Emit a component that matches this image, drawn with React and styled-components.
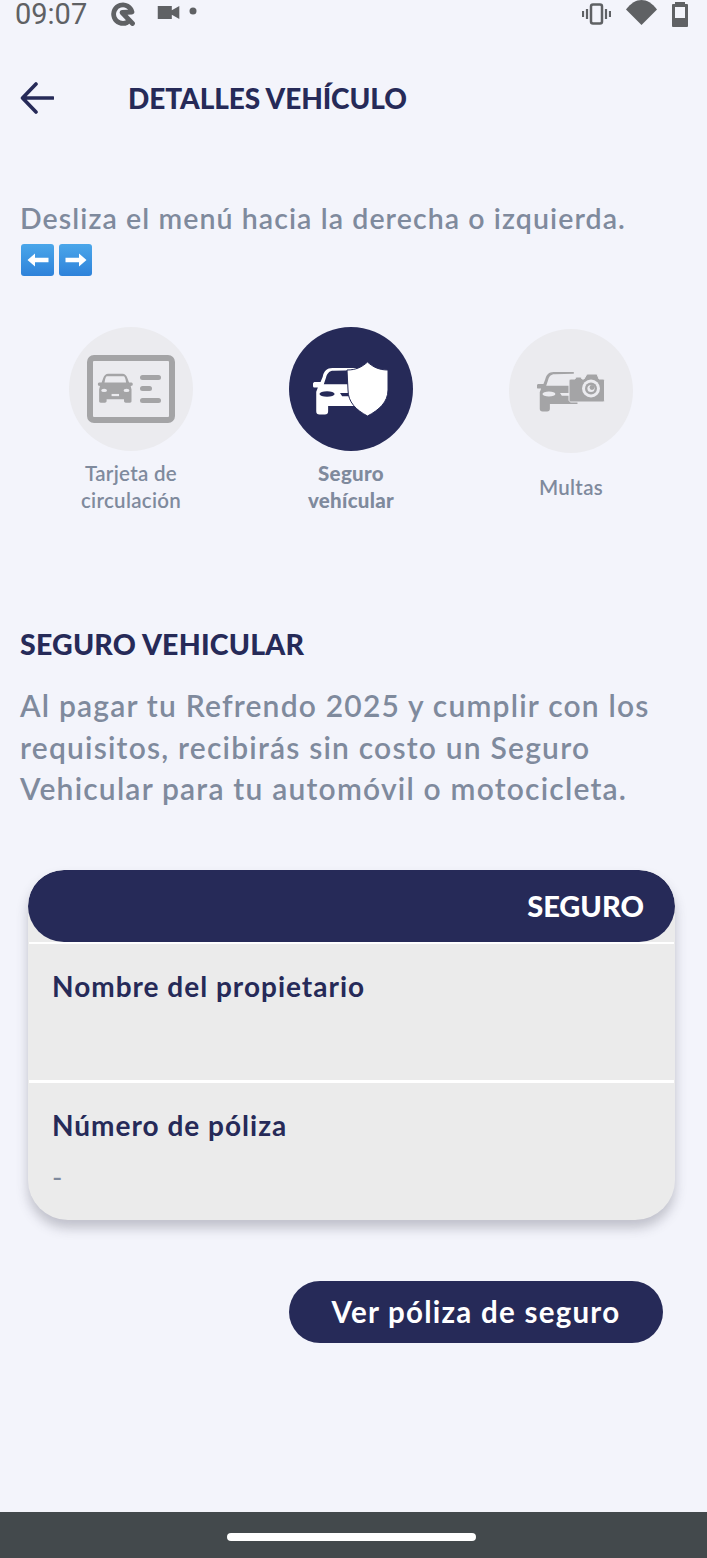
import React from "react";
import styled, { createGlobalStyle } from "styled-components";

const navy = "#262a58";
const slate = "#7f8a9d";
const iconGrey = "#a4a4a6";
const circleGrey = "#ebebef";
const statusGrey = "#5f6164";

const GlobalStyle = createGlobalStyle`
  html, body {
    margin: 0;
    padding: 0;
    background: #f3f4fb;
  }
  * {
    box-sizing: border-box;
  }
`;

const Screen = styled.div`
  width: 707px;
  height: 1558px;
  display: flex;
  flex-direction: column;
  background: #f3f4fb;
  font-family: "Lato", "Liberation Sans", sans-serif;
  overflow: hidden;
`;

const StatusBar = styled.div`
  height: 28px;
  padding: 0 19px 0 15px;
  display: flex;
  align-items: center;
  color: ${statusGrey};
`;

const Clock = styled.span`
  font-family: "Roboto", sans-serif;
  font-size: 29px;
  line-height: 28px;
  margin-right: 23px;
`;

const StatusIcons = styled.div`
  display: flex;
  align-items: center;
  gap: ${(p) => p.$gap}px;
  margin-left: ${(p) => (p.$right ? "auto" : "0")};
`;

const StatusGlyph = styled.svg`
  margin-right: ${(p) => p.$right || 0}px;
  margin-bottom: ${(p) => p.$lift || 0}px;
`;

const Header = styled.header`
  height: 56px;
  margin-top: 42px;
  padding-left: 20px;
  display: flex;
  align-items: center;
`;

const BackButton = styled.div`
  width: 108px;
  display: flex;
  align-items: center;
`;

const Title = styled.h1`
  margin: 0;
  font-size: 28px;
  font-weight: 900;
  letter-spacing: -0.08px;
  color: ${navy};
`;

const Hint = styled.p`
  margin: 72px 0 0 20px;
  font-size: 28.5px;
  line-height: 40px;
  font-weight: 600;
  letter-spacing: 1.08px;
  color: ${slate};
  white-space: nowrap;
`;

const ArrowKeys = styled.div`
  margin: 6px 0 0 21px;
  display: flex;
  gap: 5px;
`;

const ArrowKey = styled.div`
  width: 33px;
  height: 32px;
  border-radius: 3px;
  display: flex;
  align-items: center;
  justify-content: center;
  background: linear-gradient(#4aa6ea, #2e82da);
`;

const Menu = styled.div`
  margin: 51px 0 0 21px;
  display: grid;
  grid-template-columns: repeat(3, 220px);
`;

const MenuItem = styled.div`
  display: flex;
  flex-direction: column;
  align-items: center;
  padding-top: ${(p) => (p.$low ? 2 : 0)}px;
`;

const MenuCircle = styled.div`
  width: 124px;
  height: 124px;
  border-radius: 50%;
  display: flex;
  align-items: center;
  justify-content: center;
  background: ${(p) => (p.$active ? navy : circleGrey)};
`;

const MenuLabel = styled.div`
  margin-top: ${(p) => (p.$single ? 21 : 9)}px;
  font-size: 20.5px;
  line-height: 27px;
  font-weight: ${(p) => (p.$active ? 900 : 600)};
  letter-spacing: 0.3px;
  text-align: center;
  color: ${slate};
`;

const SectionTitle = styled.h2`
  margin: 112px 0 0 20px;
  font-size: 28.5px;
  line-height: 36px;
  font-weight: 900;
  letter-spacing: 0.2px;
  color: ${navy};
`;

const Paragraph = styled.p`
  margin: 23px 0 0 20px;
  font-size: 30px;
  line-height: 41.5px;
  font-weight: 600;
  letter-spacing: 1.2px;
  color: ${slate};
  white-space: nowrap;
`;

const Card = styled.section`
  margin: 60px 32px 0 28px;
  height: 350px;
  background: #ebebeb;
  border-radius: 36px 36px 40px 40px;
  box-shadow: 0 8px 12px rgba(60, 62, 80, 0.28);
  overflow: hidden;
`;

const CardHead = styled.div`
  height: 72px;
  padding-right: 31px;
  display: flex;
  align-items: center;
  justify-content: flex-end;
  background: ${navy};
  border-radius: 36px;
  font-size: 29px;
  font-weight: 900;
  color: #fff;
`;

const Field = styled.div`
  height: ${(p) => p.$height}px;
  padding: 24px 23px 0;
  margin: 0 1px;
  border-top: ${(p) => p.$line}px solid #fff;
`;

const FieldLabel = styled.div`
  font-size: 28px;
  line-height: 36px;
  font-weight: 700;
  letter-spacing: 1px;
  color: ${navy};
`;

const FieldValue = styled.div`
  margin-top: 19px;
  font-size: 28px;
  line-height: 30px;
  color: ${slate};
`;

const Actions = styled.div`
  margin: 61px 44px 0 0;
  display: flex;
  justify-content: flex-end;
`;

const PolicyButton = styled.button`
  width: 374px;
  height: 62px;
  border: 0;
  border-radius: 31px;
  background: ${navy};
  color: #fff;
  font-family: inherit;
  font-size: 29.5px;
  font-weight: 700;
  letter-spacing: 1.25px;
`;

const NavBar = styled.div`
  margin-top: auto;
  height: 46px;
  display: flex;
  align-items: center;
  justify-content: center;
  padding: 4px 4px 0 0;
  background: #43494c;
`;

const HomePill = styled.div`
  width: 249px;
  height: 8px;
  border-radius: 4px;
  background: #fff;
`;

// front of a car in a 48x44 box, its right edge runs under whatever badge sits beside it
const CarFront = ({ color, glass, x, y, s }) => (
  <g transform={`translate(${x} ${y}) scale(${s})`} fill={color}>
    <path d="M9 9 C10 4 13 1 18 1 L40 1 L40 3 L19 3.500 C15 3.500 13 6 12 10 L10 16 L44 16 L44 36 L14 36 L14 41 C14 43 13 44 11 44 L6 44 C4 44 3 43 3 41 L3 23 L4.500 19 L1 19 C0 19 0 18 0 17 L0 15.500 C0 14.500 1 14 2 14 L7 14 Z" />
    <ellipse cx="13" cy="25" rx="7" ry="2.600" fill={glass} />
    <path d="M25 24 L38 24 L38 27 L27 27 Z" fill={glass} />
  </g>
);

const LicenseIcon = () => (
  <svg width="88" height="68" viewBox="0 0 88 68">
    <rect x="3" y="3" width="82" height="62" rx="4" fill="none" stroke={iconGrey} strokeWidth="6" />
    <g transform="translate(3 5.500) scale(0.83 0.88)">
      <path d="M22 15 L39 15 C42 15 44 17 45 20 L47 25 L50 25 C51 25 51.500 26 51.500 27 C51.500 28 51 29 49 29 L50 33 L50 46 C50 47 49.500 48 48 48 L43 48 C42 48 41 47 41 46 L41 44 L20 44 L20 46 C20 47 19 48 18 48 L13 48 C11.500 48 11 47 11 46 L11 33 L12 29 C10 29 9.500 28 9.500 27 C9.500 26 10 25 11 25 L14 25 L16 20 C17 17 19 15 22 15 Z" fill={iconGrey} />
      <path d="M21 18 L40 18 C42 18 42.500 20 43.500 25 L17.500 25 C18.500 20 19 18 21 18 Z" fill={circleGrey} />
      <ellipse cx="17" cy="34" rx="3.500" ry="1.800" fill={circleGrey} />
      <ellipse cx="44" cy="34" rx="3.500" ry="1.800" fill={circleGrey} />
      <rect x="26" y="38" width="9" height="2.500" fill={circleGrey} />
    </g>
    <g fill={iconGrey}>
      <rect x="53" y="20" width="21" height="5" rx="2.500" />
      <rect x="53" y="31" width="12" height="5" rx="2.500" />
      <rect x="53" y="43" width="21" height="5" rx="2.500" />
    </g>
  </svg>
);

const ShieldIcon = () => (
  <svg width="76" height="54" viewBox="0 0 76 54">
    <CarFront color="#fff" glass={navy} x={0} y={5} s={1.08} />
    <path d="M34 8 C43 8 49 5 54.500 0 C60 5 66 8 75 8 L75 28 C75 40 66 48 54.500 54 C43 48 35 40 35 28 Z" fill="#fff" stroke={navy} strokeWidth="1" />
  </svg>
);

const CameraIcon = () => (
  <svg width="68" height="42" viewBox="0 0 68 42">
    <CarFront color={iconGrey} glass={circleGrey} x={0} y={1} s={0.92} />
    <path d="M34 9 L38 9 L39 7 L44 7 L45 9 L47 9 L50 4 L60 4 L62 9 L66 9 C67 9 67.500 10 67.500 11 L67.500 30 C67.500 31 67 32 66 32 L34 32 C33 32 32 31 32 30 L32 11 C32 10 33 9 34 9 Z" fill={iconGrey} stroke={circleGrey} strokeWidth="1" />
    <circle cx="54" cy="18.500" r="9" fill={circleGrey} />
    <circle cx="54" cy="18.500" r="6" fill={iconGrey} />
    <circle cx="54" cy="18.500" r="3.600" fill={circleGrey} />
    <circle cx="55" cy="17.500" r="2.400" fill={iconGrey} />
  </svg>
);

const ArrowGlyph = ({ flip }) => (
  <svg width="22" height="14" viewBox="0 0 22 14" style={flip ? { transform: "scaleX(-1)" } : undefined}>
    <path d="M0.500 7 L8 0.500 L8 4.800 L21.500 4.800 L21.500 9.200 L8 9.200 L8 13.500 Z" fill="#fff" />
  </svg>
);

const App = () => {
  return (
    <Screen>
      <GlobalStyle />
      <StatusBar>
        <Clock>09:07</Clock>
        <StatusIcons $gap={0}>
          <StatusGlyph width="26" height="24" viewBox="0 0 26 24" $right={21}>
            <path d="M17 20.500 A9.300 9.300 0 1 1 22 10 L12 10.500 L22.500 21.500" fill="none" stroke={statusGrey} strokeWidth="4.800" strokeLinecap="round" strokeLinejoin="round" />
          </StatusGlyph>
          <StatusGlyph width="24" height="15" viewBox="0 0 24 16" $right={8} $lift={4}>
            <path d="M0 1 L15 1 L15 5.500 L23 1 L23 15 L15 10.500 L15 15 L0 15 Z" fill={statusGrey} />
          </StatusGlyph>
          <StatusGlyph width="8" height="8" viewBox="0 0 8 8" $lift={6}>
            <circle cx="4" cy="4" r="3.500" fill={statusGrey} />
          </StatusGlyph>
        </StatusIcons>
        <StatusIcons $right $gap={15}>
          <svg width="29" height="22" viewBox="0 0 29 22">
            <rect x="9" y="1.500" width="11" height="19" rx="2" fill="none" stroke={statusGrey} strokeWidth="2.500" />
            <path d="M5 6 L5 16 M1 8 L1 14 M24 6 L24 16 M28 8 L28 14" stroke={statusGrey} strokeWidth="2.200" />
          </svg>
          <StatusGlyph width="31" height="26" viewBox="0 0 31 26" $lift={2}>
            <path d="M15.500 25 L0 9.500 C5 3 10 0 15.500 0 C21 0 26 3 31 9.500 Z" fill={statusGrey} />
          </StatusGlyph>
          <svg width="16" height="25" viewBox="0 0 16 25">
            <path d="M3 0 L13 0 L13 2 L15 2 C15.500 2 16 2.500 16 3 L16 24 C16 24.500 15.500 25 15 25 L1 25 C0.500 25 0 24.500 0 24 L0 3 C0 2.500 0.500 2 1 2 L3 2 Z" fill={statusGrey} />
            <rect x="3" y="5" width="10" height="11" fill="#f3f4fb" />
          </svg>
        </StatusIcons>
      </StatusBar>

      <Header>
        <BackButton>
          <svg width="34" height="32" viewBox="0 0 34 32">
            <path d="M33 16 L3 16 M16 2 L2.500 16 L16 30" fill="none" stroke={navy} strokeWidth="3.600" strokeLinecap="round" strokeLinejoin="round" />
          </svg>
        </BackButton>
        <Title>DETALLES VEHÍCULO</Title>
      </Header>

      <Hint>Desliza el menú hacia la derecha o izquierda.</Hint>
      <ArrowKeys>
        <ArrowKey><ArrowGlyph /></ArrowKey>
        <ArrowKey><ArrowGlyph flip /></ArrowKey>
      </ArrowKeys>

      <Menu>
        <MenuItem>
          <MenuCircle><LicenseIcon /></MenuCircle>
          <MenuLabel>Tarjeta de<br />circulación</MenuLabel>
        </MenuItem>
        <MenuItem>
          <MenuCircle $active><ShieldIcon /></MenuCircle>
          <MenuLabel $active>Seguro<br />vehícular</MenuLabel>
        </MenuItem>
        <MenuItem $low>
          <MenuCircle><CameraIcon /></MenuCircle>
          <MenuLabel $single>Multas</MenuLabel>
        </MenuItem>
      </Menu>

      <SectionTitle>SEGURO VEHICULAR</SectionTitle>
      <Paragraph>
        Al pagar tu Refrendo 2025 y cumplir con los<br />
        requisitos, recibirás sin costo un Seguro<br />
        Vehicular para tu automóvil o motocicleta.
      </Paragraph>

      <Card>
        <CardHead>SEGURO</CardHead>
        <Field $height={138} $line={2}>
          <FieldLabel>Nombre del propietario</FieldLabel>
        </Field>
        <Field $height={140} $line={3}>
          <FieldLabel>Número de póliza</FieldLabel>
          <FieldValue>-</FieldValue>
        </Field>
      </Card>

      <Actions>
        <PolicyButton>Ver póliza de seguro</PolicyButton>
      </Actions>

      <NavBar>
        <HomePill />
      </NavBar>
    </Screen>
  );
};

export default App;
